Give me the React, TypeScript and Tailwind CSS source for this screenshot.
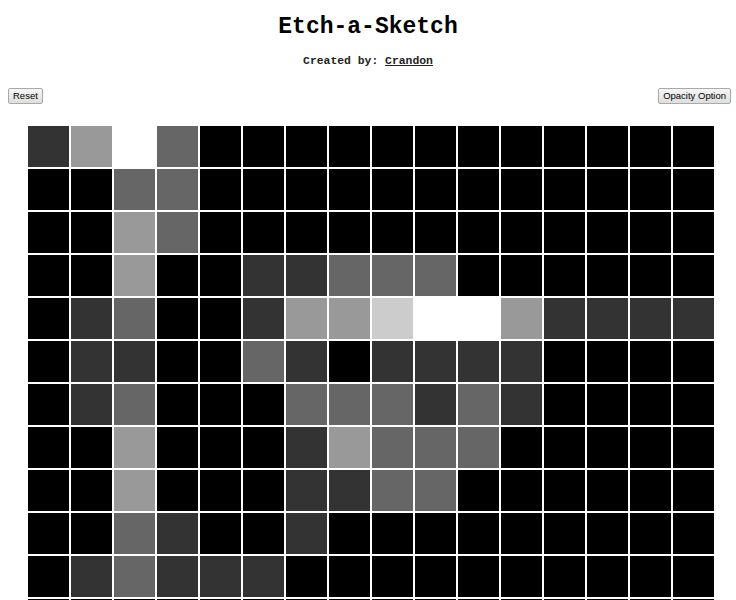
import React from 'react';

// shade levels: 0 = untouched (white) ... 5 = fully black
const shades: Record<number, string> = {
  0: 'bg-white',
  1: 'bg-[#cccccc]',
  2: 'bg-[#999999]',
  3: 'bg-[#666666]',
  4: 'bg-[#333333]',
  5: 'bg-black',
};

const rows: string[] = [
  '4203555555555555',
  '5533555555555555',
  '5523555555555555',
  '5525544333555555',
  '5435542210024444',
  '5445534544445555',
  '5435553334345555',
  '5525554233355555',
  '5525554433555555',
  '5534554555555555',
  '5434445555555555',
  '5555555555555555',
  '5555555555555555',
  '5555555555555555',
  '5555555555555555',
  '5555555555555555',
];

const grid = rows.map(r => r.split('').map(Number));

const Button = ({ label }: { label: string }) => (
  <button
    type='button'
    className='h-[16px] px-[4px] border border-[#a9a9a9] rounded-[2px] bg-gradient-to-b from-[#f6f6f6] to-[#dedede] text-[9.5px] leading-none text-black font-["Liberation_Sans",Arial,sans-serif]'>
    {label}
  </button>
);

const App = () => {
  return (
    <div className='w-full h-[600px] overflow-hidden bg-white'>
      <h1 className='pt-[14px] text-center text-[23px] leading-[26px] font-bold text-black font-["Liberation_Mono","Courier_New",monospace]'>
        Etch-a-Sketch
      </h1>
      <p className='mt-[14px] text-center text-[11.4px] leading-[14px] font-bold text-[#222] font-["Liberation_Mono","Courier_New",monospace]'>
        Created by: <a href='#' className='underline text-[#222]'>Crandon</a>
      </p>
      <div className='mt-[20px] flex justify-between pl-[8px] pr-[5px]'>
        <Button label='Reset' />
        <Button label='Opacity Option' />
      </div>
      <div className='mt-[22px] ml-[28px] grid grid-cols-[repeat(16,41px)] gap-[2px]'>
        {grid.map((row, i) =>
          row.map((level, j) => (
            <div key={`${i}-${j}`} className={`h-[41px] ${shades[level]}`} />
          ))
        )}
      </div>
    </div>
  );
};

export default App;
